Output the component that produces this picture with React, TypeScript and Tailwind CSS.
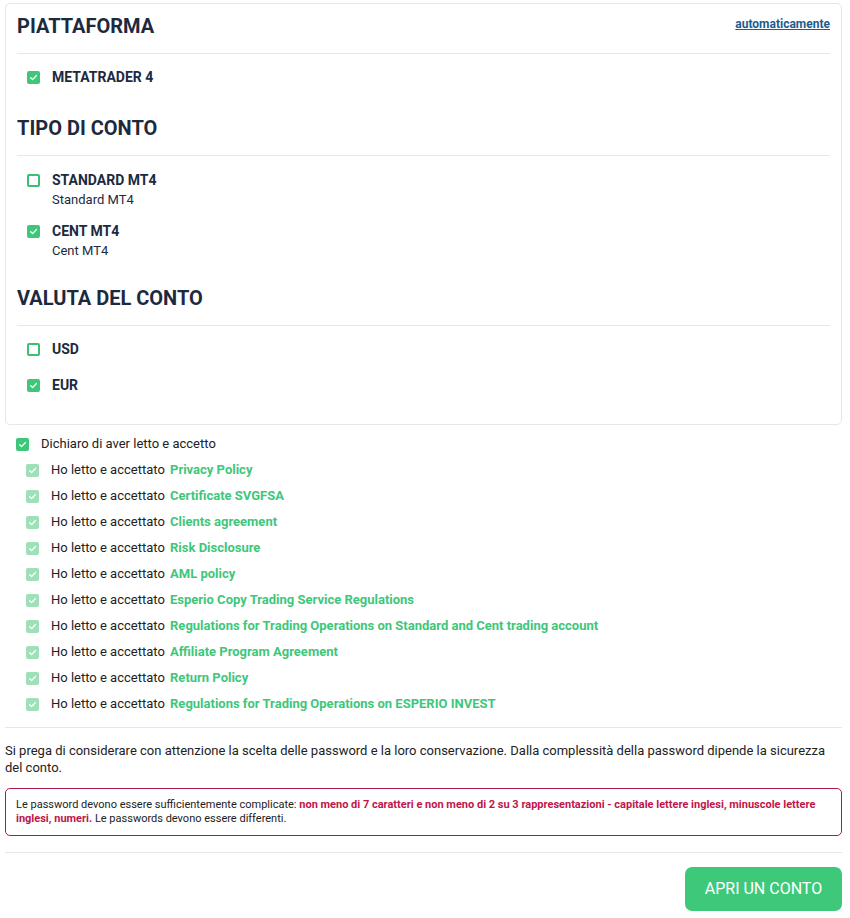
import React from "react";

const F = { fontFamily: "Roboto, 'Liberation Sans', sans-serif" };

function Box({ checked, faded }: { checked: boolean; faded?: boolean }) {
  if (!checked)
    return <span className="inline-block w-[13px] h-[13px] rounded-[2px] border-2 border-solid border-[#3bbf73] bg-white shrink-0" />;
  return (
    <span className={`inline-flex w-[13px] h-[13px] rounded-[2px] items-center justify-center shrink-0 ${faded ? "bg-[#9fe0b9]" : "bg-[#3ec77a]"}`}>
      <svg width="9" height="9" viewBox="0 0 10 10" fill="none">
        <path d="M1.8 5.2 L4 7.3 L8.3 2.8" stroke="white" strokeWidth="1.4" strokeLinecap="round" strokeLinejoin="round" />
      </svg>
    </span>
  );
}

function Heading({ children, right }: { children: React.ReactNode; right?: React.ReactNode }) {
  return (
    <div className="flex justify-between items-start border-b border-[#e5e7eb] pb-[11px]">
      <h2 className="text-[20px] leading-[32px] font-bold text-[#1d2a3e]">{children}</h2>
      {right}
    </div>
  );
}

function Opt({ checked, label, sub }: { checked: boolean; label: string; sub?: string }) {
  return (
    <div className="pl-[10px]">
      <div className="flex items-center gap-[12px] h-[20px]">
        <Box checked={checked} />
        <span className="text-[14px] font-bold text-[#1d2a3e]">{label}</span>
      </div>
      {sub && <div className="pl-[25px] text-[13px] leading-[20px] text-[#1d2a3e]">{sub}</div>}
    </div>
  );
}

const docs = [
  "Privacy Policy",
  "Certificate SVGFSA",
  "Clients agreement",
  "Risk Disclosure",
  "AML policy",
  "Esperio Copy Trading Service Regulations",
  "Regulations for Trading Operations on Standard and Cent trading account",
  "Affiliate Program Agreement",
  "Return Policy",
  "Regulations for Trading Operations on ESPERIO INVEST",
];

export default function App() {
  return (
    <div style={F} className="w-[850px] min-h-[918px] bg-white pl-[5px] pr-[8px] pt-[3px] text-[#222]">
      <div className="border border-[#e5e7eb] rounded-[5px] px-[11px] pt-[6px] pb-[29px]">
        <Heading
          right={
            <a className="text-[12px] font-bold text-[#1b5d8f] underline mt-[5px]" href="#">
              automaticamente
            </a>
          }
        >
          PIATTAFORMA
        </Heading>
        <div className="pt-[13px]">
          <Opt checked label="METATRADER 4" />
        </div>
        <div className="mt-[25px]">
          <Heading>TIPO DI CONTO</Heading>
        </div>
        <div className="pt-[14px] flex flex-col gap-[11px]">
          <Opt checked={false} label="STANDARD MT4" sub="Standard MT4" />
          <Opt checked label="CENT MT4" sub="Cent MT4" />
        </div>
        <div className="mt-[21px]">
          <Heading>VALUTA DEL CONTO</Heading>
        </div>
        <div className="pt-[13px] flex flex-col gap-[16px]">
          <Opt checked={false} label="USD" />
          <Opt checked label="EUR" />
        </div>
      </div>

      <div className="pt-[9px] pl-[11px]">
        <div className="flex items-center gap-[12px] h-[20px]">
          <Box checked />
          <span className="text-[13px] text-[#222]">Dichiaro di aver letto e accetto</span>
        </div>
        <div className="pl-[10px] pt-[6px] flex flex-col gap-[6px]">
          {docs.map((d) => (
            <div key={d} className="flex items-center gap-[12px] h-[20px]">
              <Box checked faded />
              <span className="text-[13px] text-[#222]">
                Ho letto e accettato{" "}
                <a href="#" className="font-bold text-[#3ec77a] ml-[2px]">
                  {d}
                </a>
              </span>
            </div>
          ))}
        </div>
      </div>

      <div className="border-t border-[#e5e7eb] mt-[13px]" />
      <p className="text-[13px] leading-[17px] text-[#222] mt-[14px]">
        Si prega di considerare con attenzione la scelta delle password e la loro conservazione. Dalla complessità della password dipende la sicurezza del conto.
      </p>
      <div className="mt-[12px] border border-[#a61c4f] rounded-[5px] px-[10px] pt-[9px] pb-[9px] text-[11px] leading-[14px] text-[#222]">
        Le password devono essere sufficientemente complicate:{" "}
        <span className="font-bold text-[#c0154a]">
          non meno di 7 caratteri e non meno di 2 su 3 rappresentazioni - capitale lettere inglesi, minuscole lettere inglesi, numeri.
        </span>{" "}
        Le passwords devono essere differenti.
      </div>
      <div className="border-t border-[#e5e7eb] mt-[16px]" />
      <div className="flex justify-end pt-[14px]">
        <button className="bg-[#3ec97a] text-white text-[16px] rounded-[7px] w-[157px] h-[44px]">APRI UN CONTO</button>
      </div>
    </div>
  );
}
